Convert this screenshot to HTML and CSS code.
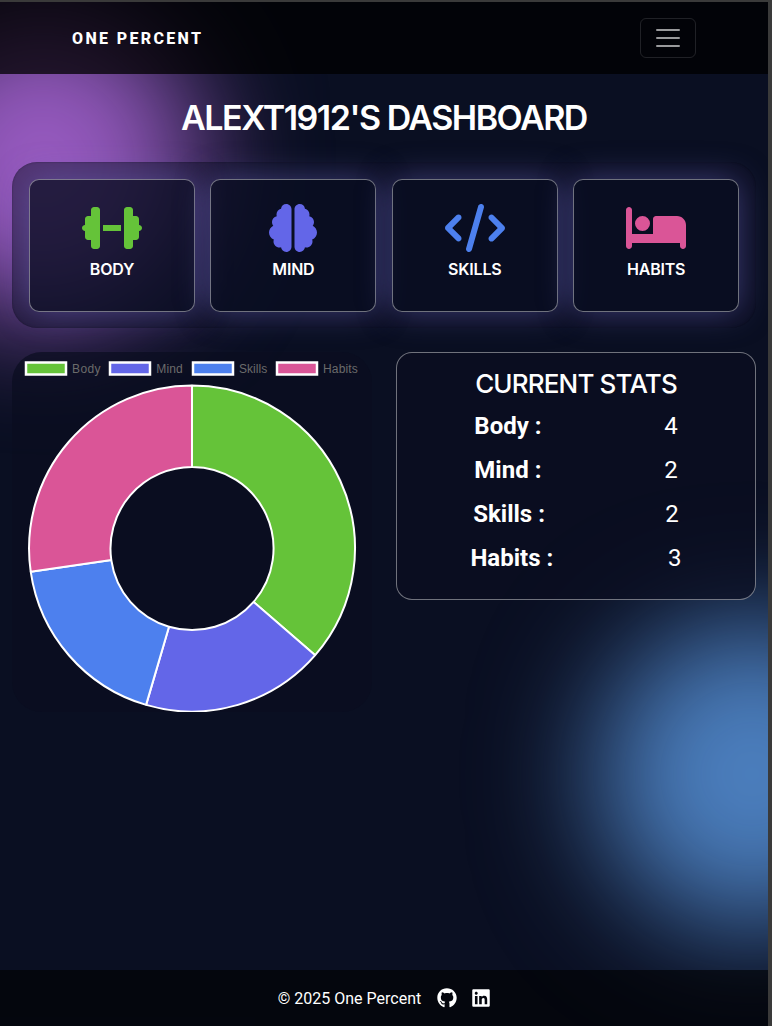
FILE: index.html
```html
<!DOCTYPE html>
<html lang="en">
<head>
<meta charset="utf-8">
<title>One Percent</title>
<link rel="stylesheet" href="styles.css">
</head>
<body>
<div class="page">
  <div class="blob blob-purple"></div>
  <div class="blob blob-blue"></div>
  <nav class="navbar">
    <a class="brand">ONE PERCENT</a>
    <button class="toggler" aria-label="Menu">
      <svg width="30" height="30" viewBox="0 0 30 30"><path d="M4 7h22M4 15h22M4 23h22" stroke="currentColor" stroke-width="2" stroke-linecap="round"/></svg>
    </button>
  </nav>
  <main class="main">
    <h1 class="title">ALEXT1912'S DASHBOARD</h1>
    <section class="categories">
      <a class="card body">
        <svg class="icon" viewBox="0 0 640 512"><path d="M96 64c0-17.7 14.3-32 32-32h32c17.7 0 32 14.3 32 32V224v64V448c0 17.7-14.3 32-32 32H128c-17.7 0-32-14.3-32-32V384H64c-17.7 0-32-14.3-32-32V288c-17.7 0-32-14.3-32-32s14.3-32 32-32V160c0-17.7 14.3-32 32-32H96V64zm448 0v64h32c17.7 0 32 14.3 32 32v64c17.7 0 32 14.3 32 32s-14.3 32-32 32v64c0 17.7-14.3 32-32 32H544v64c0 17.7-14.3 32-32 32H480c-17.7 0-32-14.3-32-32V288 224 64c0-17.7 14.3-32 32-32h32c17.7 0 32 14.3 32 32zM416 224v64H224V224H416z"/></svg>
        <span class="label">BODY</span>
      </a>
      <a class="card mind">
        <svg class="icon" viewBox="0 0 512 512"><path d="M184 0c30.9 0 56 25.1 56 56V456c0 30.9-25.1 56-56 56c-28.9 0-52.7-21.9-55.7-50.1c-5.2 1.4-10.7 2.1-16.3 2.1c-35.3 0-64-28.7-64-64c0-7.4 1.3-14.6 3.6-21.2C21.4 367.4 0 338.2 0 304c0-31.9 18.7-59.5 45.8-72.3C37.1 220.8 32 207 32 192c0-30.7 21.6-56.3 50.4-62.6C80.8 123.9 80 118 80 112c0-29.9 20.6-55.1 48.3-62.1C131.3 21.9 155.1 0 184 0zM328 0c28.9 0 52.6 21.9 55.7 49.9c27.8 7 48.3 32.1 48.3 62.1c0 6-.8 11.9-2.4 17.4c28.8 6.2 50.4 31.9 50.4 62.6c0 15-5.1 28.8-13.8 39.7C493.3 244.5 512 272.1 512 304c0 34.2-21.4 63.4-51.6 74.8c2.3 6.6 3.6 13.8 3.6 21.2c0 35.3-28.7 64-64 64c-5.6 0-11.1-.7-16.3-2.1c-3 28.2-26.8 50.1-55.7 50.1c-30.9 0-56-25.1-56-56V56c0-30.9 25.1-56 56-56z"/></svg>
        <span class="label">MIND</span>
      </a>
      <a class="card skills">
        <svg class="icon" viewBox="0 0 640 512"><path d="M392.8 1.2c-17-4.9-34.7 5-39.6 22l-128 448c-4.9 17 5 34.7 22 39.6s34.7-5 39.6-22l128-448c4.9-17-5-34.7-22-39.6zm80.6 120.1c-12.5 12.5-12.5 32.8 0 45.3L562.7 256l-89.4 89.4c-12.5 12.5-12.5 32.8 0 45.3s32.8 12.5 45.3 0l112-112c12.5-12.5 12.5-32.8 0-45.3l-112-112c-12.5-12.5-32.8-12.5-45.3 0zm-306.7 0c-12.5-12.5-32.8-12.5-45.3 0l-112 112c-12.5 12.5-12.5 32.8 0 45.3l112 112c12.5 12.5 32.8 12.5 45.3 0s12.5-32.8 0-45.3L77.3 256l89.4-89.4c12.5-12.5 12.5-32.8 0-45.3z"/></svg>
        <span class="label">SKILLS</span>
      </a>
      <a class="card habits">
        <svg class="icon" viewBox="0 0 640 512"><path d="M32 32c17.7 0 32 14.3 32 32V320H288V160c0-17.7 14.3-32 32-32H544c53 0 96 43 96 96V448c0 17.7-14.3 32-32 32s-32-14.3-32-32V416H352 320 64v32c0 17.7-14.3 32-32 32s-32-14.3-32-32V64C0 46.3 14.3 32 32 32zm144 96a80 80 0 1 1 0 160 80 80 0 1 1 0-160z"/></svg>
        <span class="label">HABITS</span>
      </a>
    </section>
    <section class="overview">
      <div class="chart">
        <svg width="360" height="360" viewBox="0 0 360 360">
          <g class="legend">
            <rect class="body" x="14" y="10.5" width="40" height="12"/>
            <rect class="mind" x="98" y="10.5" width="40" height="12"/>
            <rect class="skills" x="181" y="10.5" width="40" height="12"/>
            <rect class="habits" x="265" y="10.5" width="40" height="12"/>
          </g>
          <g class="legend-text">
            <text x="60" y="20.5" textLength="28.5">Body</text>
            <text x="144.3" y="20.5" textLength="26.5">Mind</text>
            <text x="227" y="20.5" textLength="28.3">Skills</text>
            <text x="311" y="20.5" textLength="34.8">Habits</text>
          </g>
          <g class="ring" transform="translate(180 196.5)">
            <path class="body" d="M0-163A163 163 0 0 1 123.2 106.7L61.6 53.4A81.5 81.5 0 0 0 0-81.5z"/>
            <path class="mind" d="M123.2 106.7A163 163 0 0 1-45.9 156.4L-23 78.2A81.5 81.5 0 0 0 61.6 53.4z"/>
            <path class="skills" d="M-45.9 156.4A163 163 0 0 1-161.3 23.2L-80.7 11.6A81.5 81.5 0 0 0-23 78.2z"/>
            <path class="habits" d="M-161.3 23.2A163 163 0 0 1 0-163L0-81.5A81.5 81.5 0 0 0-80.7 11.6z"/>
          </g>
        </svg>
      </div>
      <div class="stats">
        <h2 class="stats-title">CURRENT STATS</h2>
        <div class="stat"><b>Body :</b><span>4</span></div>
        <div class="stat"><b>Mind :</b><span>2</span></div>
        <div class="stat"><b>Skills :</b><span>2</span></div>
        <div class="stat"><b>Habits :</b><span>3</span></div>
      </div>
    </section>
  </main>
  <footer class="footer">
    <span>© 2025 One Percent</span>
    <svg width="20" height="20" viewBox="0 0 496 512"><path d="M165.9 397.4c0 2-2.3 3.6-5.2 3.6-3.3.3-5.6-1.3-5.6-3.6 0-2 2.3-3.6 5.2-3.6 3-.3 5.6 1.3 5.6 3.6zm-31.1-4.5c-.7 2 1.3 4.3 4.3 4.9 2.6 1 5.6 0 6.2-2s-1.3-4.3-4.3-5.2c-2.6-.7-5.5.3-6.2 2.3zm44.2-1.7c-2.9.7-4.9 2.6-4.6 4.9.3 2 2.9 3.3 5.9 2.6 2.9-.7 4.9-2.6 4.6-4.6-.3-1.9-3-3.2-5.9-2.9zM244.8 8C106.1 8 0 113.3 0 252c0 110.9 69.8 205.8 169.5 239.2 12.8 2.3 17.3-5.6 17.3-12.1 0-6.2-.3-40.4-.3-61.4 0 0-70 15-84.7-29.8 0 0-11.4-29.1-27.8-36.6 0 0-22.9-15.7 1.6-15.4 0 0 24.9 2 38.6 25.8 21.9 38.6 58.6 27.5 72.9 20.9 2.3-16 8.8-27.1 16-33.7-55.9-6.2-112.3-14.3-112.3-110.5 0-27.5 7.6-41.3 23.6-58.9-2.6-6.5-11.1-33.3 2.6-67.9 20.9-6.5 69 27 69 27 20-5.6 41.5-8.5 62.8-8.5s42.8 2.9 62.8 8.5c0 0 48.1-33.6 69-27 13.7 34.7 5.2 61.4 2.6 67.9 16 17.7 25.8 31.5 25.8 58.9 0 96.5-58.9 104.2-114.8 110.5 9.2 7.9 17 22.9 17 46.4 0 33.7-.3 75.4-.3 83.6 0 6.5 4.6 14.4 17.3 12.1C428.2 457.8 496 362.9 496 252 496 113.3 383.5 8 244.8 8z"/></svg>
    <svg width="18" height="20" viewBox="0 0 448 512"><path d="M416 32H31.9C14.3 32 0 46.5 0 64.3v383.4C0 465.5 14.3 480 31.9 480H416c17.6 0 32-14.5 32-32.3V64.3c0-17.8-14.4-32.3-32-32.3zM135.4 416H69V202.2h66.5V416zm-33.2-243c-21.3 0-38.5-17.3-38.5-38.5S80.9 96 102.2 96c21.2 0 38.5 17.3 38.5 38.5 0 21.3-17.2 38.5-38.5 38.5zm282.1 243h-66.4V312c0-24.8-.5-56.7-34.5-56.7-34.6 0-39.9 27-39.9 54.9V416h-66.4V202.2h63.7v29.2h.9c8.9-16.8 30.6-34.5 62.2-34.5 66.5 0 78.9 43.8 78.9 100.9V416z"/></svg>
  </footer>
</div>
</body>
</html>
```
FILE: styles.css
```css
* { box-sizing: border-box; }
body {
  margin: 0;
  height: 1026px;
  padding: 2px 4px 0 0;
  background: #3a3a3a;
  color: #fff;
  font-family: Roboto, sans-serif;
}
.page {
  position: relative;
  height: 1024px;
  overflow: hidden;
  display: flex;
  flex-direction: column;
  background: #0a0f22;
}
/* Decorative glows behind the content */
.blob {
  position: absolute;
  width: 310px;
  height: 310px;
  border-radius: 50%;
  filter: blur(60px);
}
.blob-purple { left: -112px; top: 5px; background: #965abf; }
.blob-blue { left: 597px; top: 617px; background: #4b7ebd; }
.navbar {
  position: relative;
  height: 72px;
  flex: none;
  padding: 0 72px;
  display: flex;
  align-items: center;
  justify-content: space-between;
  background: rgba(0, 0, 0, .75);
}
.brand { font-size: 16px; font-weight: 800; letter-spacing: 2.35px; }
.toggler {
  width: 56px;
  height: 40px;
  padding: 0;
  display: grid;
  place-items: center;
  background: none;
  border: 1px solid rgba(255, 255, 255, .12);
  border-radius: 6px;
  color: rgba(255, 255, 255, .6);
}
.main { position: relative; flex: 1; padding: 0 12px; }
.title {
  margin: 0;
  height: 88px;
  text-align: center;
  font: 600 34px/88px Inter, sans-serif;
  letter-spacing: -1.5px;
}
.categories {
  height: 166px;
  padding: 17px;
  display: grid;
  grid-template-columns: repeat(4, 166px);
  gap: 15.4px;
  border-radius: 25px;
  background: rgba(12, 14, 33, .5);
  box-shadow: inset 0 0 2px rgba(0, 0, 0, .4);
}
.card {
  height: 133px;
  padding-top: 24px;
  display: flex;
  flex-direction: column;
  align-items: center;
  border: 1px solid rgba(255, 255, 255, .42);
  border-radius: 10px;
  background: rgba(9, 14, 33, .6);
  box-shadow: 0 0 32px rgba(108, 104, 196, .5);
}
.icon { height: 48px; fill: currentColor; }
.label {
  margin-top: 8px;
  color: #fff;
  font: 600 16px/19px Inter, sans-serif;
  letter-spacing: -.2px;
}
.body { color: #65c339; fill: #65c339; }
.mind { color: #6366e8; fill: #6366e8; }
.skills { color: #4d80ee; fill: #4d80ee; }
.habits { color: #da5597; fill: #da5597; }
.overview { margin-top: 24px; display: flex; gap: 24px; align-items: flex-start; }
.chart {
  width: 360px;
  height: 360px;
  border-radius: 30px;
  background: rgba(10, 13, 32, .7);
}
.chart svg { display: block; }
.legend rect { stroke: #fff; stroke-width: 2.5; }
.legend-text { font: 12px "Liberation Sans", Arial, sans-serif; fill: #6b6b6b; }
.ring path { stroke: #fff; stroke-width: 2; stroke-linejoin: bevel; }
.stats {
  width: 360px;
  height: 248px;
  padding-top: 11px;
  border: 1px solid rgba(255, 255, 255, .42);
  border-radius: 16px;
  background: rgba(10, 13, 32, .7);
}
.stats-title {
  margin: 0;
  text-align: center;
  font: 550 26px/40px Inter, sans-serif;
  letter-spacing: -.85px;
}
.stat {
  height: 44px;
  line-height: 44px;
  padding: 0 16px;
  display: flex;
  justify-content: space-around;
  font-size: 24px;
}
.footer {
  position: relative;
  height: 56px;
  flex: none;
  display: flex;
  align-items: center;
  justify-content: center;
  gap: 15.5px;
  background: rgba(0, 0, 0, .6);
  font-size: 16px;
}
.footer svg { fill: #fff; }
```
